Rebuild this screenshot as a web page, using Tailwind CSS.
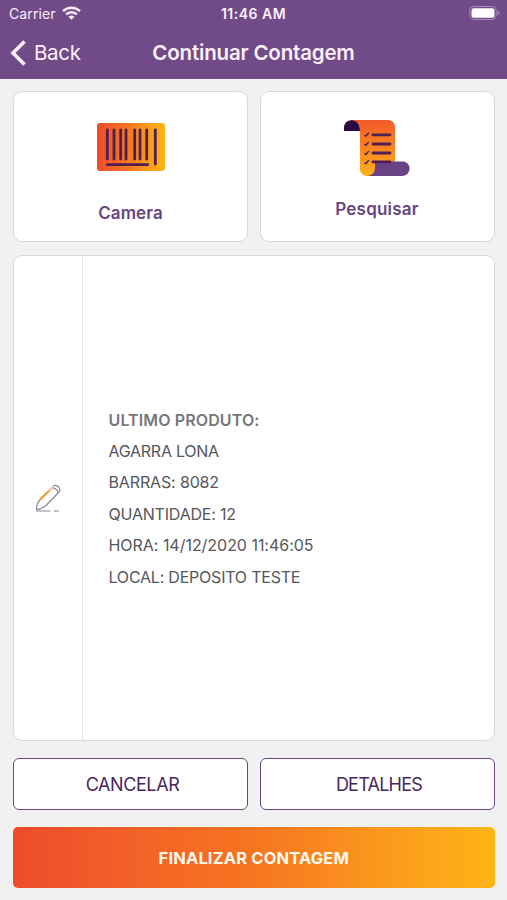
<!DOCTYPE html>
<html lang="pt-BR">
<head>
<meta charset="utf-8">
<title>Continuar Contagem</title>
<script src="https://cdn.jsdelivr.net/npm/@tailwindcss/browser@4"></script>
</head>
<body class="flex h-[900px] w-[507px] flex-col overflow-hidden bg-[#f1f1f1] font-['Inter','Liberation_Sans',sans-serif]">
<header class="h-[79px] shrink-0 bg-[#704b87] text-[#fdeffd]">
  <div class="grid h-7 grid-cols-3 items-center pl-[7px] pr-[7px]">
    <div class="flex items-center gap-[6px] pl-[2px]">
      <span class="text-[14px] leading-7 tracking-[0.1px]">Carrier</span>
      <svg class="-mt-[2px] h-[14px] w-[19px]" viewBox="0 0 19 14" fill="none" stroke="currentColor" stroke-width="2.4"><path d="M1 5.2C5.8.6 13.2.6 18 5.2M4.1 8.4c3.1-2.9 7.7-2.9 10.8 0"/><path d="M6.5 10.7c1.7-1.5 4.3-1.5 6 0l-3 3z" fill="currentColor" stroke="none"/></svg>
    </div>
    <div class="text-center text-[14px] font-semibold leading-7 tracking-[0.5px]">11:46 AM</div>
    <svg class="-mt-[2px] h-[14px] w-[31px] justify-self-end" viewBox="0 0 31 14"><rect x=".8" y=".5" width="26.4" height="13" rx="4" fill="none" stroke="#a58bb5"/><rect x="2.5" y="2.3" width="23" height="9.4" rx="2.3" fill="#fff"/><path d="M28.5 4.5c2.4.8 2.4 4.2 0 5z" fill="#a58bb5"/></svg>
  </div>
  <div class="grid h-[50px] grid-cols-[1fr_auto_1fr] items-center pl-[10px] pr-[10px]">
    <div class="flex items-center gap-[8px]">
      <svg class="h-[26px] w-4" viewBox="0 0 16 26" fill="none" stroke="currentColor" stroke-width="3.6"><path d="M14.5 1.5 3 13l11.5 11.5"/></svg>
      <span class="text-[20.5px] leading-7 tracking-[-0.3px]">Back</span>
    </div>
    <h1 class="text-[20.5px] font-semibold leading-7 tracking-[-0.18px]">Continuar Contagem</h1>
  </div>
</header>
<main class="flex flex-1 flex-col pl-[13px] pr-[12.5px] pt-[12px]">
  <div class="grid h-[151px] grid-cols-[235px_235px] justify-between">
    <div class="flex flex-col items-center rounded-[9px] border border-[#d8d8d8] bg-white pt-[31px]">
      <svg class="h-12 w-[68px]" viewBox="0 0 68 48">
        <defs><linearGradient id="cam"><stop stop-color="#ee4b2b"/><stop offset=".5" stop-color="#f67d22"/><stop offset="1" stop-color="#fdb515"/></linearGradient></defs>
        <rect width="68" height="48" rx="3" fill="url(#cam)"/>
        <path d="M10.3 7v29M17 7v29M23.7 7v29M29 7v29M37.7 7v29M43 7v29M49.7 7v29M58.3 7v34M10.3 41.7h40.4" stroke="#4f1f50" stroke-width="2.8" stroke-linecap="round"/>
      </svg>
      <span class="mt-[30px] text-[17px] font-semibold leading-6 tracking-[0.1px] text-[#674583]">Camera</span>
    </div>
    <div class="flex flex-col items-center rounded-[9px] border border-[#d8d8d8] bg-white pt-[28px]">
      <svg class="h-14 w-[66px]" viewBox="0 0 66 56">
        <defs><linearGradient id="roll" x1="0" y1="0" x2="0" y2="1"><stop stop-color="#f15a29"/><stop offset=".5" stop-color="#fa8520"/><stop offset="1" stop-color="#fdb01c"/></linearGradient></defs>
        <path d="M6 0h38a7 7 0 0 1 7 7v35L30 56h-7a7 7 0 0 1-7-7V11z" fill="url(#roll)"/>
        <path d="M0 11V8C0 3 3 .2 7.500.2S15.800 3.500 15.800 11z" fill="#2a0a45"/>
        <path d="M31 41.500h28a6.500 6.500 0 0 1 6.500 6.500c0 5-3 8-8 8H23c5-.5 8-3.500 8-8z" fill="#684282"/>
        <path d="M29 14.800h17M29 24h17M29 33h17M29 41.800h17" stroke="#4f2150" stroke-width="2.800" stroke-linecap="round"/>
        <path d="m20.500 15 1.500 1 2.700-3.300m-4.200 11.500 1.500 1 2.700-3.300m-4.200 11.500 1.500 1 2.700-3.300m-4.200 11.500 1.500 1 2.700-3.300" stroke="#4f2150" stroke-width="1.500" fill="none"/>
      </svg>
      <span class="mt-[21px] text-[17px] font-semibold leading-6 tracking-[0.2px] text-[#674583]">Pesquisar</span>
    </div>
  </div>
  <section class="mt-[13px] flex h-[486px] rounded-[9px] border border-[#d8d8d8] bg-white">
    <div class="flex w-[69px] items-center justify-center border-r border-[#e5e5e5]">
      <svg class="h-7 w-[26px]" viewBox="0 0 26 28" fill="none" stroke="#8c839d" stroke-width="1.200"><path d="M17.500 3.500C19 1 21 .8 23 2.500s2.700 3.500 1 5.500l-13 13.500c-2.700 2.500-5.800 3.600-9.300 4.200C1.200 23.500 2 19 4.500 16.500zM17.300 3.700c2.500 0 6 3 6.200 5.800"/><path d="M5 15.500 17 4" stroke="#e9a32b" stroke-width="2"/><path d="M14 6.800 18.500 2.600" stroke="#f4c7b8" stroke-width="2"/><path d="M1 27h14.500M19 27h5"/></svg>
    </div>
    <div class="flex flex-col justify-center pl-[25.500px] pt-[1.500px] text-[16px] leading-[31.400px] tracking-[-0.200px] text-[#56565b]">
      <p class="font-semibold tracking-[0.120px] text-[#75777c]">ULTIMO PRODUTO:</p>
      <p class="tracking-[-0.260px]">AGARRA LONA</p>
      <p class="tracking-[-0.140px]">BARRAS: 8082</p>
      <p>QUANTIDADE: 12</p>
      <p class="tracking-[-0.030px]">HORA: 14/12/2020 11:46:05</p>
      <p class="tracking-[-0.220px]">LOCAL: DEPOSITO TESTE</p>
    </div>
  </section>
  <div class="mt-[17px] grid h-[52px] grid-cols-[235px_235px] justify-between text-[18px] text-[#47265f]">
    <button class="rounded-[6px] border-[1.500px] border-[#6b4b7d] bg-white pl-[4px] tracking-[-0.400px]"><span>CANCELAR</span></button>
    <button class="rounded-[6px] border-[1.500px] border-[#6b4b7d] bg-white pl-[4px] tracking-[-0.750px]"><span>DETALHES</span></button>
  </div>
  <button class="mt-[17px] h-[61px] rounded-[5px] bg-linear-to-r from-[#ee4b2b] via-[#f67521] to-[#fdb515] pt-[2px] text-[16.500px] font-bold tracking-[0.150px] text-[#fff8ee]"><span>FINALIZAR CONTAGEM</span></button>
</main>
</body>
</html>
